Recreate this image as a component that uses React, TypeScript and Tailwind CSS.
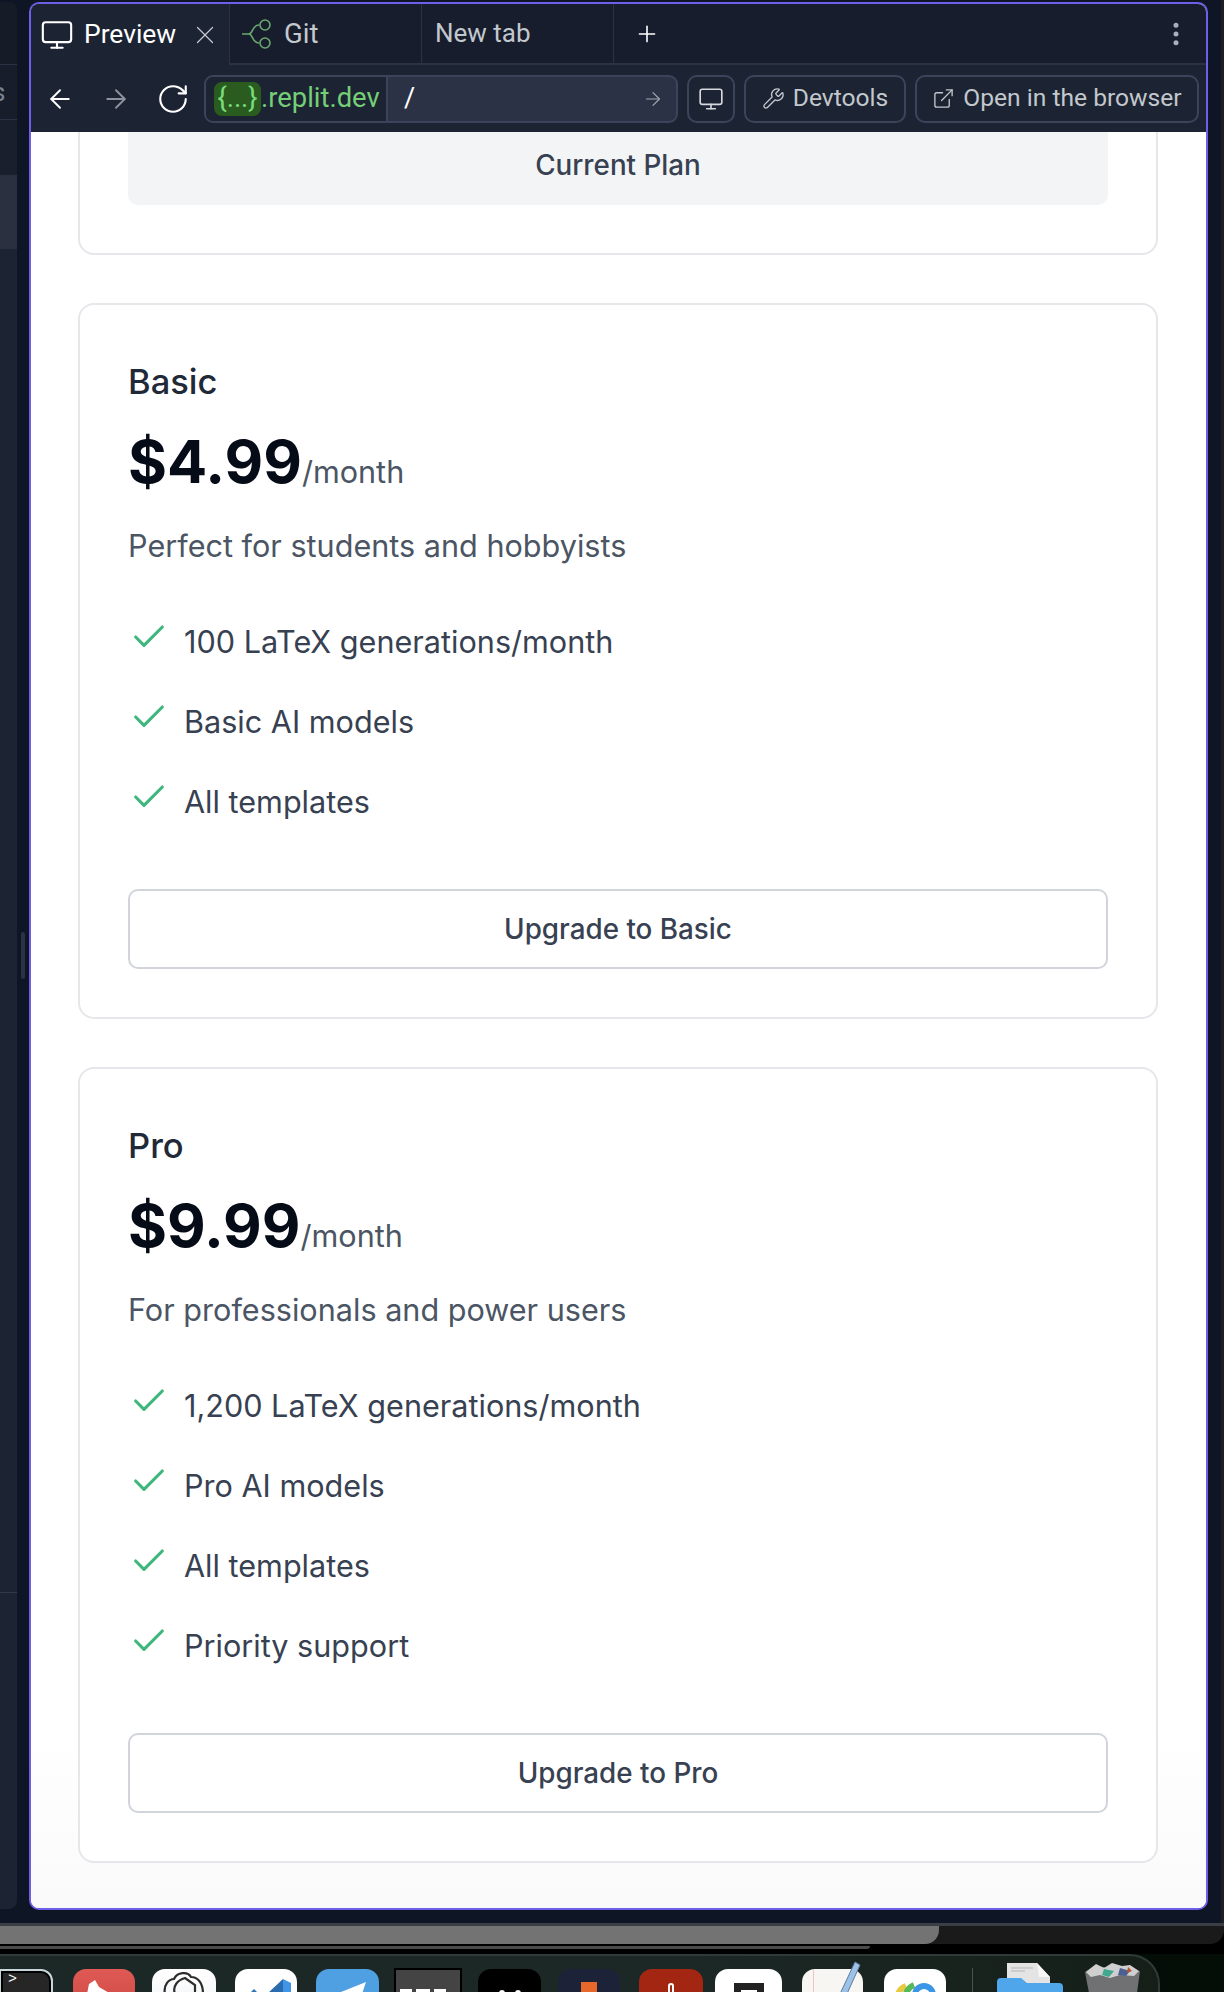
import React from 'react';
import { ArrowLeft, ArrowRight, Check, ExternalLink, Monitor, MoreVertical, Plus, RotateCw, Wrench, X } from 'lucide-react';

const GitIcon = () => (
  <svg width="32" height="32" viewBox="0 0 32 32" fill="none" stroke="#6aa86f" strokeWidth="1.6" className="shrink-0">
    <path d="M1 16h7M8 16c4 0 3-9 10-9M8 16c4 0 3 9 10 9" />
    <circle cx="24" cy="7" r="5" />
    <circle cx="24" cy="25" r="5" />
  </svg>
);

interface PlanProps {
  name: string;
  price: string;
  description: string;
  features: string[];
  cta: string;
}

const PlanCard: React.FC<PlanProps> = ({ name, price, description, features, cta }) => (
  <div className="border-2 border-[#e5e7eb] rounded-[16px] px-[48px] pt-[55px] pb-[48px] bg-white">
    <h3 className="text-[34.5px] leading-[44px] text-[#1f2937] font-medium">{name}</h3>
    <div className="mt-[21px] flex items-baseline h-[72px]">
      <span className="text-[59.6px] leading-[72px] font-bold text-[#060b18]">{price}</span>
      <span className="text-[30.6px] text-[#4b5563]">/month</span>
    </div>
    <p className="mt-[27px] text-[30.6px] leading-[44px] text-[#4b5563]">{description}</p>
    <ul className="mt-[49px] flex flex-col gap-[30px]">
      {features.map((feature) => (
        <li key={feature} className="flex items-start h-[50px]">
          <Check size={40} strokeWidth={1.9} className="ml-[1px] mr-[15px] text-[#3eb67c] shrink-0" />
          <span className="text-[30.6px] leading-[50px] text-[#374151]">{feature}</span>
        </li>
      ))}
    </ul>
    <button className="mt-[62px] w-full h-[80px] pt-[2px] border-2 border-[#d1d5db] rounded-[10px] text-[27.8px] font-medium text-[#374151] bg-white">
      {cta}
    </button>
  </div>
);

const Browser = () => (
  <div className="w-[1179px] h-[1908px] border-2 border-[#6f5fe8] rounded-[10px] overflow-hidden flex flex-col bg-white">
    {/* Tab strip */}
    <div className="h-[61px] shrink-0 bg-[#171d2d] flex font-['Roboto',sans-serif] text-[26px]">
      <div className="w-[198px] bg-[#1c2333] flex items-center pl-[9px] text-white">
        <Monitor size={34} strokeWidth={1.5} className="shrink-0" />
        <span className="ml-[10px] text-[26.4px]">Preview</span>
        <X size={30} strokeWidth={1} className="ml-[14px] text-[#c4c8d0] shrink-0" />
      </div>
      <div className="w-[192px] border-l border-b-2 border-[#2b3245] flex items-center pl-[11px] text-[#c2c8cc]">
        <GitIcon />
        <span className="ml-[11px] text-[27.5px]">Git</span>
      </div>
      <div className="w-[193px] border-l border-r border-b-2 border-[#2b3245] flex items-center pl-[13px] text-[#c2c8cc]">New tab</div>
      <div className="flex-1 border-b-2 border-[#2b3245] flex items-center justify-between pl-[20px] pr-[15px] text-white">
        <Plus size={26} strokeWidth={1.5} />
        <MoreVertical size={30} strokeWidth={2} className="text-[#a9b0bb]" />
      </div>
    </div>
    {/* Toolbar */}
    <div className="h-[67px] shrink-0 bg-[#1c2333] flex items-center pl-[14px] pr-[7px] font-['Roboto',sans-serif] text-[24.6px]">
      <ArrowLeft size={30} strokeWidth={1.5} className="text-white shrink-0" />
      <ArrowRight size={30} strokeWidth={1.5} className="ml-[26px] text-[#8d929c] shrink-0" />
      <RotateCw size={34} strokeWidth={1.5} className="ml-[25px] text-white shrink-0" />
      <div className="ml-[14px] w-[474px] h-[48px] rounded-[9px] border-2 border-[#3c445c] bg-[#2b3245] flex items-center overflow-hidden shrink-0">
        <div className="w-[182px] h-full bg-[#1c2333] border-r-2 border-[#3c445c] flex items-center pl-[8px] shrink-0 text-[27.4px] text-[#74cf76]">
          <span className="h-[34px] w-[47px] rounded-[8px] bg-[#2a5c20] flex items-center justify-center text-[#79dc7b]">{'{...}'}</span>
          <span>.replit.dev</span>
        </div>
        <span className="ml-[16px] text-[27px] text-white">/</span>
        <ArrowRight size={22} strokeWidth={1.3} className="ml-auto mr-[12px] text-[#a2a7b2]" />
      </div>
      <div className="ml-[9px] w-[48px] h-[48px] rounded-[10px] border-2 border-[#3c445c] flex items-center justify-center text-[#d5d8dd] shrink-0">
        <Monitor size={26} strokeWidth={1.5} />
      </div>
      <div className="ml-[9px] w-[162px] h-[48px] rounded-[10px] border-2 border-[#3c445c] flex items-center justify-center gap-[8px] text-[#c2c8cc] shrink-0">
        <Wrench size={23} strokeWidth={1.4} />
        <span>Devtools</span>
      </div>
      <div className="ml-[9px] w-[284px] h-[48px] rounded-[10px] border-2 border-[#3c445c] flex items-center justify-center gap-[8px] text-[#c2c8cc] shrink-0">
        <ExternalLink size={23} strokeWidth={1.4} />
        <span>Open in the browser</span>
      </div>
    </div>
    {/* Preview page */}
    <div className="flex-1 pl-[47px] pr-[48px] font-['Inter',sans-serif] bg-gradient-to-b from-white from-90% to-[#fafafa] overflow-hidden">
      <div className="h-[123px] border-2 border-t-0 border-[#e5e7eb] rounded-b-[16px] px-[48px]">
        <div className="h-[73px] pb-[5px] rounded-b-[10px] bg-[#f3f4f6] flex items-center justify-center text-[27.8px] font-medium text-[#374151]">
          Current Plan
        </div>
      </div>
      <div className="mt-[48px] flex flex-col gap-[48px]">
        <PlanCard
          name="Basic"
          price="$4.99"
          description="Perfect for students and hobbyists"
          features={['100 LaTeX generations/month', 'Basic AI models', 'All templates']}
          cta="Upgrade to Basic"
        />
        <PlanCard
          name="Pro"
          price="$9.99"
          description="For professionals and power users"
          features={['1,200 LaTeX generations/month', 'Pro AI models', 'All templates', 'Priority support']}
          cta="Upgrade to Pro"
        />
      </div>
    </div>
  </div>
);

const SidePanel = () => (
  <div className="w-[17px] h-[1907px] rounded-r-[8px] bg-[#1c2333] overflow-hidden flex flex-col font-['Roboto',sans-serif]">
    <div className="h-[63px] bg-[#161b28] border-b border-[#2b3245]" />
    <div className="h-[55px] bg-[#171d2b] border-b border-[#2b3245] text-[#7c8290] text-[26px] leading-[55px] -indent-[8px] overflow-hidden">s</div>
    <div className="h-[55px] bg-[#1a1f2e]" />
    <div className="h-[74px] bg-[#2b3040]" />
    <div className="flex-1" />
    <div className="h-[317px] border-t border-[#343a4a]" />
  </div>
);

const Dock = () => (
  <div className="h-[38px] flex bg-[#040d06] overflow-hidden">
    <div className="w-[1160px] h-[60px] flex items-start border-t-2 border-r-2 border-[#2e3b38] rounded-tr-[30px] bg-gradient-to-r from-[#1c2826] from-60% to-[#151f18]">
      <div className="mt-[13px] w-[54px] h-[50px] -ml-[1px] rounded-tr-[12px] border-2 border-[#c7d6da] bg-black p-[2px]">
        <div className="h-full rounded-tr-[8px] bg-[#262626] text-white text-[15px] leading-[14px] pl-[5px] font-['Liberation_Mono',monospace]">&gt;</div>
      </div>
      <div className="ml-[20px] mt-[13px] w-[62px] h-[50px] rounded-[13px] bg-gradient-to-b from-[#df5a54] to-[#cc4642] flex justify-center">
        <svg width="40" height="25" viewBox="0 0 40 25" fill="white" className="-ml-[10px]"><path d="M8 25 L10 15 L16 11 L20 18 L32 25 Z" /></svg>
      </div>
      <div className="ml-[17px] mt-[13px] w-[64px] h-[50px] rounded-[13px] bg-gradient-to-b from-white to-[#eef0f2] flex justify-center">
        <svg width="46" height="25" viewBox="0 0 46 25" fill="none" stroke="#2c2c2c" strokeWidth="2.2">
          <path d="M4 25C2 16 8 10 13 10C16 3 27 2 30 8C37 8 42 14 42 25" />
          <path d="M14 25C11 17 17 11 24 9L34 16V25" />
        </svg>
      </div>
      <div className="ml-[19px] mt-[13px] w-[62px] h-[50px] rounded-[13px] bg-white flex justify-center">
        <svg width="52" height="25" viewBox="0 0 52 25" className="ml-[2px]">
          <path d="M8 25L13 20L18 25Z" fill="#2f74b8" />
          <path d="M26 25L42 10V25Z" fill="#2a6cb0" />
          <path d="M42 10L50 14V25H42Z" fill="#3f96e6" />
        </svg>
      </div>
      <div className="ml-[19px] mt-[13px] w-[63px] h-[50px] rounded-[13px] bg-[#4f9fe3] flex justify-center">
        <svg width="44" height="25" viewBox="0 0 44 25" fill="white"><path d="M10 25L40 13L36 25Z" /></svg>
      </div>
      <div className="ml-[15px] mt-[12px] w-[68px] h-[50px] bg-[#444] border-2 border-black pl-[4px] pt-[19px]">
        <div className="flex gap-[4px]">
          <span className="w-[12px] h-[4px] bg-white" />
          <span className="w-[14px] h-[4px] bg-white" />
          <span className="w-[12px] h-[4px] bg-white" />
        </div>
      </div>
      <div className="ml-[16px] mt-[13px] w-[63px] h-[50px] rounded-[13px] bg-black flex justify-center gap-[10px] pt-[21px]">
        <span className="w-[6px] h-[6px] rounded-full bg-white" />
        <span className="w-[6px] h-[6px] rounded-full bg-white" />
      </div>
      <div className="ml-[17px] mt-[13px] w-[62px] h-[50px] rounded-[13px] bg-[#1c2338] flex justify-center pt-[13px]">
        <span className="w-[16px] h-[30px] bg-[#e8672a]" />
      </div>
      <div className="ml-[19px] mt-[13px] w-[64px] h-[50px] rounded-[13px] bg-[#a32613] flex justify-center pt-[14px]">
        <span className="w-[6px] h-[12px] rounded-full border-2 border-white" />
      </div>
      <div className="ml-[12px] mt-[13px] w-[67px] h-[50px] rounded-[13px] bg-white flex justify-center pt-[14px]">
        <span className="w-[30px] h-[24px] border-t-[7px] border-x-[7px] border-[#222]" />
      </div>
      <div className="ml-[20px] mt-[13px] w-[61px] h-[50px] rounded-t-[13px] bg-[#f8f6f2] relative">
        <div className="ml-[11px] w-px h-full bg-[#f0c4c0]" />
        <svg width="24" height="34" viewBox="0 0 24 34" className="absolute left-[36px] -top-[7px] overflow-visible">
          <path d="M17 0L22 3L8 34H1Z" fill="#9cc2e8" stroke="#5c7d9e" strokeWidth="1" />
        </svg>
      </div>
      <div className="ml-[21px] mt-[13px] w-[62px] h-[50px] rounded-[13px] bg-white flex items-start justify-center pt-[12px]">
        <svg width="44" height="20" viewBox="0 0 44 20" fill="none" strokeWidth="6">
          <path d="M4 20C4 12 8 7 13 5" stroke="#e9c93f" />
          <path d="M12 20C12 11 16 6 21 4" stroke="#58b95a" />
          <circle cx="31" cy="14" r="9" stroke="#3b96e8" />
        </svg>
      </div>
      <div className="ml-[26px] mt-[12px] w-px h-[40px] bg-[#4a5350]" />
      <svg width="66" height="30" viewBox="0 0 66 30" className="ml-[24px] mt-[7px] shrink-0">
        <path d="M10 0H40L53 14V30H10Z" fill="#e4e4e4" />
        <path d="M40 0L53 14H42Z" fill="#f7f7f7" />
        <path d="M14 5H36M14 8H28" stroke="#b5b5b5" strokeWidth="1" />
        <path d="M4 15H24L30 20H62Q66 20 66 24V30H0V19Q0 15 4 15Z" fill="#4fa6ea" />
      </svg>
      <svg width="56" height="30" viewBox="0 0 56 30" className="ml-[21px] mt-[7px] shrink-0">
        <path d="M1 9L10 3L56 8L53 30H5Z" fill="#6f7173" />
        <path d="M2 9L12 1L20 5L28 0L38 3L46 2L55 8L50 13L36 12L26 15L16 12L7 14Z" fill="#cfcfcf" />
        <path d="M20 6L30 8L25 14L18 12Z" fill="#3fa88f" />
        <path d="M36 5L46 8L42 13L34 12Z" fill="#4b5f92" />
        <path d="M44 4L48 8L43 10Z" fill="#b5532c" />
      </svg>
    </div>
  </div>
);

const App: React.FC = () => {
  return (
    <div className="w-[1224px] h-[1992px] overflow-hidden flex flex-col bg-black">
      <div className="h-[1923px] shrink-0 pt-[2px] flex bg-[#0e1525] border-r-[3px] border-[#1d1f24]">
        <SidePanel />
        <div className="w-[12px] flex justify-end pt-[930px]">
          <div className="w-[4px] h-[47px] rounded-[2px] bg-[#2b3245] mr-[4px]" />
        </div>
        <Browser />
      </div>
      <div className="h-[21px] shrink-0 border-t-[3px] border-[#3a3f46] bg-[#1a1a1a] rounded-br-[14px]">
        <div className="w-[939px] h-[18px] rounded-br-[14px] bg-[#737373]" />
      </div>
      <div className="h-[2px] shrink-0 bg-black" />
      <div className="h-[3px] w-[870px] shrink-0 bg-[#4b4b4b] rounded-br-[6px]" />
      <div className="h-[5px] shrink-0 bg-black" />
      <Dock />
    </div>
  );
};

export default App;
